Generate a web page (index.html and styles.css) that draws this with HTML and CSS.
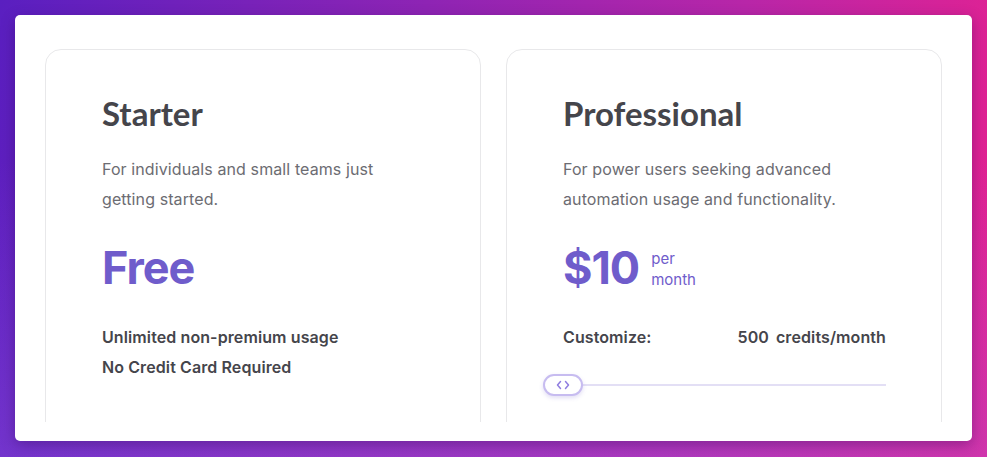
FILE: index.html
```html
<!DOCTYPE html>
<html lang="en">
<head>
<meta charset="utf-8">
<title>Pricing</title>
<link rel="stylesheet" href="styles.css">
</head>
<body>
<div class="panel">
  <div class="plans">
    <section class="plan">
      <h2 class="plan-name">Starter</h2>
      <p class="plan-desc">For individuals and small teams just getting started.</p>
      <div class="price-row"><span class="price">Free</span></div>
      <ul class="features">
        <li>Unlimited non-premium usage</li>
        <li>No Credit Card Required</li>
      </ul>
    </section>
    <section class="plan">
      <h2 class="plan-name">Professional</h2>
      <p class="plan-desc">For power users seeking advanced automation usage and functionality.</p>
      <div class="price-row">
        <span class="price">$10</span>
        <span class="period">per<br>month</span>
      </div>
      <div class="customize">
        <span class="customize-label">Customize:</span>
        <span class="customize-value"><span class="credits-num">500</span><span>credits/month</span></span>
      </div>
      <div class="slider">
        <div class="slider-track"></div>
        <div class="slider-thumb">
          <svg width="16" height="10" viewBox="0 0 16 10" fill="none" stroke="#8f7de0" stroke-width="1.5" stroke-linecap="round" stroke-linejoin="round"><path d="M5.5 1.5 2.5 5l3 3.5"/><path d="M10.5 1.5 13.5 5l-3 3.5"/></svg>
        </div>
      </div>
    </section>
  </div>
</div>
</body>
</html>
```

FILE: styles.css
```css
* { box-sizing: border-box; }
html, body { height: 100%; }
body {
  margin: 0;
  padding: 15px;
  background:
    linear-gradient(180deg, rgba(150, 100, 240, 0) 35%, rgba(150, 100, 240, 0.3) 100%),
    linear-gradient(100deg, #5a1fc0 0%, #8e24b4 40%, #b826a8 70%, #e8218f 100%);
  font-family: Inter, "Noto Sans", sans-serif;
}
.panel {
  background: #fff;
  border-radius: 5px;
  height: 426px;
  padding: 34px 30px 19px 30px;
  box-shadow: 0 4px 14px rgba(40, 0, 80, 0.35);
}
.plans {
  display: grid;
  grid-template-columns: 436px 436px;
  gap: 25px;
  height: 100%;
  overflow: hidden;
}
.plan {
  border: 1px solid #e8e8ea;
  border-radius: 16px;
  height: 420px;
  padding: 43px 55px 0 56px;
}
.plan-name {
  margin: 0;
  font-family: Lato, sans-serif;
  font-weight: 700;
  font-size: 33px;
  line-height: 40px;
  color: #45454b;
}
.plan-desc {
  margin: 21px 0 0;
  font-size: 16px;
  line-height: 30px;
  letter-spacing: 0.1px;
  color: #6c6c72;
  max-width: 300px;
}
.price-row {
  margin-top: 29px;
  display: flex;
  align-items: center;
  gap: 12px;
  height: 50px;
}
.price {
  font-size: 45px;
  line-height: 50px;
  font-weight: 700;
  color: #6f5ccb;
  letter-spacing: -1px;
}
.period {
  font-size: 15px;
  line-height: 21px;
  color: #6f5ccb;
  margin-top: 2px;
}
.features {
  list-style: none;
  margin: 29px 0 0;
  padding: 0;
}
.features li {
  font-size: 16px;
  line-height: 30px;
  letter-spacing: 0.1px;
  font-weight: 600;
  color: #45454b;
}
.customize {
  margin-top: 29px;
  display: flex;
  justify-content: space-between;
  font-size: 16px;
  line-height: 30px;
  letter-spacing: 0.1px;
  font-weight: 600;
  color: #45454b;
}
.customize-value { display: flex; gap: 7px; }
.slider {
  position: relative;
  margin-top: 22px;
  margin-left: -20px;
  height: 22px;
}
.slider-track {
  position: absolute;
  left: 2px;
  right: 0;
  top: 10px;
  height: 2px;
  background: #e3dff5;
}
.slider-thumb {
  position: absolute;
  left: 0;
  top: 0;
  width: 40px;
  height: 22px;
  border: 2px solid #c7bcf0;
  border-radius: 11px;
  background: #fff;
  display: flex;
  align-items: center;
  justify-content: center;
  box-shadow: 0 2px 4px rgba(110, 90, 200, 0.2);
}
```
